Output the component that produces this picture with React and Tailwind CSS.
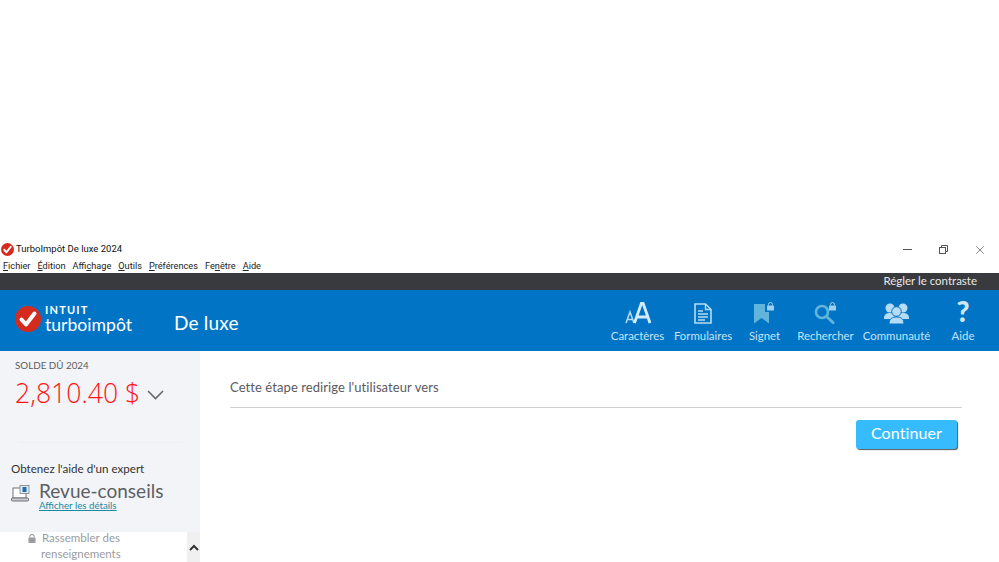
import React from 'react';
import { X } from 'lucide-react';

const LOGICIEL = { fontFamily: 'Roboto, "Noto Sans", sans-serif' };
const UI = { fontFamily: 'Lato, "Open Sans", sans-serif' };
const CHIFFRES = { fontFamily: '"Open Sans", "Noto Sans", sans-serif' };

const menus = [
  ['F', 'ichier'],
  ['É', 'dition'],
  ['Affi', 'c', 'hage'],
  ['', 'O', 'utils'],
  ['', 'P', 'références'],
  ['Fe', 'n', 'être'],
  ['', 'A', 'ide'],
];

const CheckBadge = ({ size }) => (
  <svg width={size} height={size} viewBox="0 0 26 26" className="shrink-0">
    <circle cx="13" cy="13" r="13" fill="#d52b1e" />
    <path d="M6.5 13.5 L11 18.5 L19.5 7.5" fill="none" stroke="#fff" strokeWidth="4" strokeLinecap="round" strokeLinejoin="round" />
  </svg>
);

const MenuItem = ({ parts }) => {
  const [a, b, c] = parts;
  if (parts.length === 2) {
    return <span><u>{a}</u>{b}</span>;
  }
  return <span>{a}<u>{b}</u>{c}</span>;
};

const FontIcon = () => (
  <svg width="26" height="22" viewBox="0 0 26 22" fill="none">
    <path d="M1 21 L5 10 L9 21 M2.5 17.5 H7.5" stroke="#b5dcf2" strokeWidth="1.5" />
    <path d="M9.5 21 L16.5 1 H18 L25 21 M12 15 H22.5" stroke="#d4ecf9" strokeWidth="2.8" />
  </svg>
);

const FormIcon = () => (
  <svg width="18" height="21" viewBox="0 0 18 21" fill="none" stroke="#b5dcf2">
    <path d="M1 1 H11.5 L17 6.5 V20 H1 Z" strokeWidth="1.6" />
    <path d="M11.5 1 V6.5 H17" strokeWidth="1.4" />
    <path d="M4 8 H9 M4 11 H14 M4 14 H14 M4 17 H11" strokeWidth="1.5" />
  </svg>
);

const Padlock = ({ x, y }) => (
  <g transform={`translate(${x} ${y})`}>
    <path d="M1.5 3.5 V2.5 A2 2 0 0 1 5.5 2.5 V3.5" fill="none" stroke="#9fd0ea" strokeWidth="1" />
    <rect x="0" y="3.5" width="7" height="5" rx="0.6" fill="#9fd0ea" />
  </g>
);

const BookmarkIcon = () => (
  <svg width="22" height="22" viewBox="0 0 22 22">
    <path d="M0 2 H15 V21.5 L7.5 16 L0 21.5 Z" fill="#62b5da" />
    <rect x="11" y="0" width="11" height="10" fill="#0274c6" />
    <Padlock x="13" y="0" />
  </svg>
);

const SearchIcon = () => (
  <svg width="24" height="22" viewBox="0 0 24 22" fill="none">
    <circle cx="8" cy="10" r="6" stroke="#62b5da" strokeWidth="2.6" />
    <path d="M12.5 14.5 L19 20.5" stroke="#62b5da" strokeWidth="3" strokeLinecap="round" />
    <Padlock x="15" y="0" />
  </svg>
);

const CommunityIcon = () => (
  <svg width="25" height="21" viewBox="0 0 25 21" fill="#b5dcf2">
    <circle cx="6" cy="5" r="4.5" />
    <circle cx="19" cy="5" r="4.5" />
    <path d="M0 15 C0 11 3 10 6 10 C9 10 12 11 12 15 V16 H0 Z" />
    <path d="M13 15 C13 11 16 10 19 10 C22 10 25 11 25 15 V16 H13 Z" />
    <circle cx="12.5" cy="8.5" r="4.8" stroke="#0274c6" strokeWidth="1" />
    <path d="M5 21 C5 15.5 8.5 14 12.5 14 C16.5 14 20 15.5 20 21 Z" stroke="#0274c6" strokeWidth="1" />
  </svg>
);

const tools = [
  { label: 'Caractères', icon: <FontIcon />, w: 'w-[65px]' },
  { label: 'Formulaires', icon: <FormIcon />, w: 'w-[66px]' },
  { label: 'Signet', icon: <BookmarkIcon />, w: 'w-[57px]' },
  { label: 'Rechercher', icon: <SearchIcon />, w: 'w-[65px]' },
  { label: 'Communauté', icon: <CommunityIcon />, w: 'w-[77px]' },
];

export default function App() {
  return (
    <div className="w-[999px] h-[562px] overflow-hidden bg-white flex flex-col" style={UI}>
      <div className="h-[242px]" />

      {/* barre de titre */}
      <div className="h-[15px] flex items-center pl-[1px] text-[#111] text-[9.5px]" style={LOGICIEL}>
        <CheckBadge size={13} />
        <span className="ml-[2px] flex-1">TurboImpôt De luxe 2024</span>
        <div className="w-[9px] h-px bg-[#555] mr-[27px]" />
        <svg width="9" height="9" viewBox="0 0 9 9" fill="none" stroke="#555" className="mr-[25px]">
          <rect x="0.5" y="2.5" width="6" height="6" />
          <path d="M2.5 2.5 V0.5 H8.5 V6.5 H6.5" />
        </svg>
        <X size={14} strokeWidth={1.1} className="text-[#444] mr-[12px]" />
      </div>

      <div className="h-[16px] flex items-center gap-[7px] pl-[3px] pt-[1px] text-[9.2px] text-[#222]" style={LOGICIEL}>
        {menus.map((m) => (
          <MenuItem key={m.join('')} parts={m} />
        ))}
      </div>

      <div className="h-[17px] bg-[#393a3d] flex items-center justify-end pr-[22px] pb-[2px] text-[11.5px] text-[#e8e8e8]">
        Régler le contraste
      </div>

      <div className="h-[61px] bg-[#0274c6] flex items-center text-white">
        <div className="ml-[15px] w-[159px] flex items-center shrink-0 -mt-[4px]">
          <CheckBadge size={26} />
          <div className="ml-[4px] flex flex-col">
            <span className="text-[11px] leading-[13px] font-bold tracking-[1.2px]">INTUIT</span>
            <span className="text-[17.6px] leading-[18px]">turboimpôt</span>
          </div>
        </div>
        <div className="text-[19px] tracking-[0.2px] flex-1 mt-[5px]">De luxe</div>
        <div className="flex items-start pr-[8px] mt-[1px] text-[#c4e3f6]">
          {tools.map((t) => (
            <div key={t.label} className={`${t.w} flex flex-col items-center`}>
              <div className="h-[27px] flex items-end justify-center">{t.icon}</div>
              <span className="mt-[3px] text-[11.4px] whitespace-nowrap">{t.label}</span>
            </div>
          ))}
          <div className="w-[56px] flex flex-col items-center">
            <div className="h-[27px] pt-[2px] flex items-end justify-center text-[28px] leading-[25px] font-black text-[#cfe8f7]">?</div>
            <span className="mt-[3px] text-[11.4px]">Aide</span>
          </div>
        </div>
      </div>

      <div className="flex-1 flex min-h-0">
        <aside className="w-[200px] shrink-0 bg-[#f2f4f8] flex flex-col">
          <div className="pl-[15px] pt-[7px]">
            <div className="text-[9.8px] leading-[14px] text-[#5d5d60]">SOLDE DÛ 2024</div>
            <div className="flex items-center mt-[3px]">
              <span className="text-[26.6px] leading-[36px] font-light text-[#ff1414]" style={CHIFFRES}>2,810.40 $</span>
              <svg width="17" height="10" viewBox="0 0 17 10" fill="none" stroke="#66686c" strokeWidth="1.6" className="ml-[7px] mt-[4px]">
                <path d="M1 1 L8.5 8.5 L16 1" />
              </svg>
            </div>
          </div>
          <div className="mx-[18px] mt-[31px] border-t border-[#eceef2]" />
          <div className="pl-[11px] pt-[18px]">
            <div className="text-[11.6px] leading-[16px] text-[#333]">Obtenez l'aide d'un expert</div>
            <div className="flex items-start mt-[4px]">
              <svg width="19" height="17" viewBox="0 0 19 17" fill="none" className="mt-[4px]">
                <rect x="2" y="3" width="13" height="10" fill="#fff" stroke="#6f7377" />
                <rect x="9" y="0.5" width="9" height="8" fill="#dfeaf3" stroke="#6f7377" strokeWidth="0.7" />
                <rect x="11.5" y="2" width="4" height="5" fill="#1f6fb0" />
                <rect x="0.5" y="13" width="17" height="3" rx="1" fill="#c9ccd0" stroke="#6f7377" />
              </svg>
              <div className="ml-[9px]">
                <div className="text-[19px] leading-[19px] text-[#5d5f63]">Revue-conseils</div>
                <div className="text-[9.7px] leading-[11px] text-[#19899f] underline">Afficher les détails</div>
              </div>
            </div>
          </div>
          <div className="mt-auto h-[30px] flex overflow-hidden">
            <div className="w-[187px] bg-white flex text-[11.5px] leading-[16px] text-[#9a9c9f]">
              <svg width="8" height="9" viewBox="0 0 9 10" className="ml-[28px] mt-[2px] shrink-0" fill="#9a9c9f">
                <path d="M2 4 V3 A2.5 2.5 0 0 1 7 3 V4" fill="none" stroke="#9a9c9f" strokeWidth="1.2" />
                <rect x="0.5" y="4" width="8" height="6" rx="1" />
              </svg>
              <div className="ml-[6px] -mt-[2px]">
                Rassembler des
                <br />
                <span className="-ml-[1px]">renseignements</span>
              </div>
            </div>
            <div className="flex-1 flex items-center justify-center bg-[#f0f0f0]">
              <svg width="10" height="7" viewBox="0 0 10 7" fill="none" stroke="#333" strokeWidth="2">
                <path d="M1 6 L5 2 L9 6" />
              </svg>
            </div>
          </div>
        </aside>

        <main className="flex-1 pl-[30px] pr-[37px] pt-[28px]">
          <div className="text-[13px] leading-[16px] tracking-[0.08px] text-[#5a5a5d] pb-[12px] border-b border-[#cfcfcf]">
            Cette étape redirige l'utilisateur vers
          </div>
          <div className="flex justify-end mt-[12px] mr-[5px]">
            <button className="w-[101px] h-[29px] rounded-[3px] bg-[#36bbff] text-white text-[16px] leading-[24px] pb-[4px] tracking-[0.1px] shadow-[1px_1px_1px_#555]">
              Continuer
            </button>
          </div>
        </main>
      </div>
    </div>
  );
}
